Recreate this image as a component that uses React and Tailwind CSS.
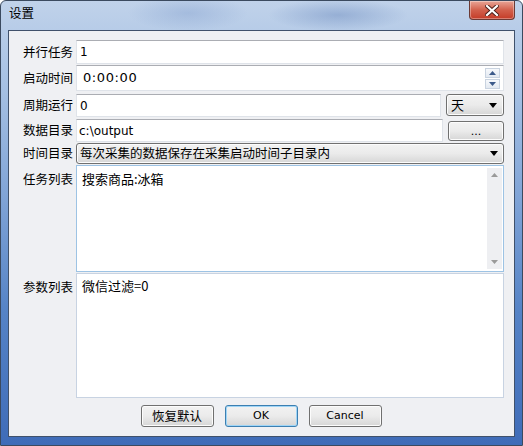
import React from "react";

const cjk = { fontFamily: '"Noto Sans CJK SC", "Microsoft YaHei", sans-serif' };
const lat = { fontFamily: '"DejaVu Sans", "Noto Sans CJK SC", sans-serif' };

function Label({ children, top }) {
  return (
    <div
      className={`w-[67px] shrink-0 pr-[3px] text-right text-[12.5px] leading-none text-black ${top ? "pt-[8px]" : "flex items-center justify-end"}`}
      style={cjk}
    >
      {children}
    </div>
  );
}

function Input({ children, className = "", style }) {
  return (
    <div
      className={`flex items-center border border-[#dfe3e9] border-t-[#abadb3] bg-white text-[12px] text-black ${className}`}
      style={style || lat}
    >
      {children}
    </div>
  );
}

function Arrow({ className = "" }) {
  return (
    <svg width="8" height="5" viewBox="0 0 8 5" className={className}>
      <path d="M0 0 H8 L4 5 Z" fill="#000" />
    </svg>
  );
}

function WinButton({ children, className = "", def, between }) {
  return (
    <div
      className={`flex items-center rounded-[3px] border text-[12px] text-black bg-gradient-to-b from-[#f2f2f2] via-[#ebebeb] to-[#d6d6d6] ${between ? "justify-between" : "justify-center"} ${def ? "border-[#3c7fb1] shadow-[inset_0_0_0_1px_#9fd5f7]" : "border-[#707070] shadow-[inset_0_0_0_1px_#fcfcfc]"} ${className}`}
    >
      {children}
    </div>
  );
}

export default function App() {
  return (
    <div className="w-[523px] h-[446px] overflow-hidden">
      <div className="flex h-full w-full flex-col rounded-t-[6px] border border-[#3b4a5f] bg-[linear-gradient(to_bottom,#c0d2ea_0%,#a5c0e3_20%,#7fa3d6_45%,#5583c6_70%,#3f6cb8_100%)] px-[7px] pb-[8px]">
        {/* title bar */}
        <div className="relative flex h-[29px] shrink-0 items-start justify-between">
          <div className="pointer-events-none absolute inset-0 bg-[radial-gradient(ellipse_60px_18px_at_180px_12px,rgba(120,150,200,0.35),transparent),radial-gradient(ellipse_70px_16px_at_330px_14px,rgba(80,115,175,0.35),transparent)]" />
          <div className="relative pl-[1px] pt-[6px] text-[12.5px] leading-none text-black" style={cjk}>
            设置
          </div>
          <div className="relative flex h-[19px] w-[46px] items-center justify-center rounded-b-[4px] border border-t-0 border-[#6b3a35] bg-gradient-to-b from-[#e8a597] via-[#d2604c] to-[#c43a26] shadow-[inset_0_0_0_1px_rgba(255,255,255,0.35)]">
            <svg width="14" height="11" viewBox="0 0 14 11">
              <path d="M2 1 L12 10 M12 1 L2 10" stroke="#4a1d18" strokeWidth="4" strokeLinecap="square" />
              <path d="M2 1 L12 10 M12 1 L2 10" stroke="#fff" strokeWidth="2.2" strokeLinecap="square" />
            </svg>
          </div>
        </div>
        {/* client area */}
        <div className="flex flex-1 flex-col border border-[#40516b] bg-[#eff0f3] pl-0 pr-[10px] pt-[9px]">
          <div className="flex h-[24px]">
            <Label>并行任务</Label>
            <Input className="flex-1 pl-[3px]">1</Input>
          </div>
          <div className="mt-[1px] flex h-[26px]">
            <Label>启动时间</Label>
            <Input className="flex-1 justify-between pl-[6px] pr-[3px]">
              <span className="text-[13px] tracking-[0.6px]">0:00:00</span>
              <div className="flex flex-col gap-[1px]">
                <div className="flex h-[10px] w-[15px] items-center justify-center border border-[#c9d3e0] bg-gradient-to-b from-[#f7f9fc] to-[#e3e9f1]">
                  <svg width="7" height="4" viewBox="0 0 7 4"><path d="M0 4 H7 L3.5 0 Z" fill="#3c5a8a" /></svg>
                </div>
                <div className="flex h-[10px] w-[15px] items-center justify-center border border-[#c9d3e0] bg-gradient-to-b from-[#f7f9fc] to-[#e3e9f1]">
                  <svg width="7" height="4" viewBox="0 0 7 4"><path d="M0 0 H7 L3.5 4 Z" fill="#3c5a8a" /></svg>
                </div>
              </div>
            </Input>
          </div>
          <div className="mt-[3px] flex h-[23px]">
            <Label>周期运行</Label>
            <Input className="flex-1 pl-[3px]">0</Input>
            <WinButton between className="ml-[5px] h-[22px] w-[58px] pl-[4px] pr-[6px]">
              <span style={cjk} className="text-[13px]">天</span>
              <Arrow />
            </WinButton>
          </div>
          <div className="mt-[2px] flex h-[23px]">
            <Label>数据目录</Label>
            <Input className="flex-1 pl-[2px]">c:\output</Input>
            <WinButton className="ml-[5px] mt-[2px] h-[20px] w-[56px]">
              <span style={lat} className="text-[11px] leading-none">...</span>
            </WinButton>
          </div>
          <div className="mt-[1px] flex h-[21px]">
            <Label>时间目录</Label>
            <WinButton between className="h-[21px] flex-1 pl-[3px] pr-[5px]">
              <span style={cjk} className="text-[12.5px] leading-none">每次采集的数据保存在采集启动时间子目录内</span>
              <Arrow />
            </WinButton>
          </div>
          <div className="mt-[1px] flex h-[107px]">
            <Label top>任务列表</Label>
            <div className="flex flex-1 border border-[#9dc3e4] bg-white">
              <div className="flex-1 pl-[5px] pt-[6px] text-[13px] leading-none text-black" style={cjk}>
                搜索商品:冰箱
              </div>
              <div className="my-[2px] mr-[1px] flex w-[15px] flex-col items-center justify-between bg-[#eeeff2] py-[5px]">
                <svg width="7" height="4" viewBox="0 0 7 4"><path d="M0 4 H7 L3.5 0 Z" fill="#9a9a9a" /></svg>
                <svg width="7" height="4" viewBox="0 0 7 4"><path d="M0 0 H7 L3.5 4 Z" fill="#9a9a9a" /></svg>
              </div>
            </div>
          </div>
          <div className="mt-[1px] flex h-[125px]">
            <Label top>参数列表</Label>
            <div className="flex-1 border border-[#c8d3e2] bg-white pl-[5px] pt-[5px] text-[13px] leading-none text-black" style={cjk}>
              微信过滤=0
            </div>
          </div>
          <div className="mt-[7px] flex justify-center gap-[11px] pl-[9px]">
            <WinButton className="h-[22px] w-[73px]">
              <span style={cjk} className="text-[12.5px]">恢复默认</span>
            </WinButton>
            <WinButton def className="h-[22px] w-[73px]">
              <span style={lat} className="text-[11px]">OK</span>
            </WinButton>
            <WinButton className="h-[22px] w-[73px]">
              <span style={lat} className="text-[11px]">Cancel</span>
            </WinButton>
          </div>
        </div>
      </div>
    </div>
  );
}
